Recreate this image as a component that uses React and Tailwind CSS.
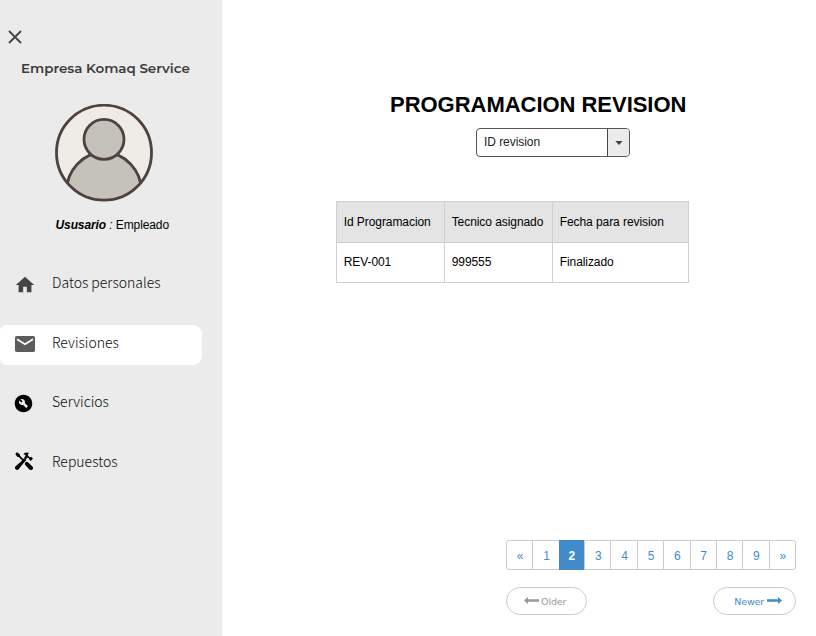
import React from "react";
import { MdHome, MdBuildCircle } from "react-icons/md";

function ToolsIcon({ className }) {
  return (
    <svg viewBox="0 0 18 18" className={className} fill="currentColor">
      <path d="M0.3 1.9L1.9 0.3L4.8 2.2L5 3.8L9.2 8L8 9.2L3.8 5L2.2 4.8z" />
      <path d="M10.4 10.4a2.2 2.2 0 0 1 2.6-.2l4.4 4.2a2.1 2.1 0 0 1-3 3l-4.2-4.4a2.2 2.2 0 0 1 .2-2.6z" />
      <path d="M8.4 2.2C9.8.2 12 0 14.2 1L12.9 2.3V3.4L14.8 5.2L16 4.8L18 6.6L15.8 8.9L13.8 6.9V6.2L12.6 5.6L10.9 7.3L9.1 5.5L10.8 3.8C10.4 2.8 9.6 2.5 8.4 2.2z" />
      <path d="M9.2 5.9L11.4 8.1L8 11.8L3.6 17.2A2.1 2.1 0 0 1 .6 14.2L5.8 9.8z" />
    </svg>
  );
}

function MailIcon({ className }) {
  return (
    <svg viewBox="0 0 20 16" className={className}>
      <rect width="20" height="16" rx="1.8" fill="currentColor" />
      <path d="M2 3.2L10 8.2L18 3.2" fill="none" stroke="#fff" strokeWidth="1.8" />
    </svg>
  );
}

const items = [
  { label: "Datos personales", Icon: MdHome, cls: "size-[22px] ml-[14px] mr-[16px] text-[#444]" },
  { label: "Revisiones", Icon: MailIcon, cls: "h-4 w-5 ml-[15px] mr-[17px] -mt-px text-[#5c5c5c]", active: true },
  { label: "Servicios", Icon: MdBuildCircle, cls: "size-[21px] ml-[13px] mr-[18px] -mt-px text-black" },
  { label: "Repuestos", Icon: ToolsIcon, cls: "size-[18px] ml-[15px] mr-[19px] -mt-[5px] text-black" },
];

const pages = ["«", "1", "2", "3", "4", "5", "6", "7", "8", "9", "»"];

function Avatar() {
  return (
    <svg viewBox="0 0 98 98" className="mt-[26px] ml-[55px] size-[98px]">
      <defs>
        <clipPath id="disc">
          <circle cx="49" cy="49" r="47.5" />
        </clipPath>
      </defs>
      <circle cx="49" cy="48.7" r="47.5" fill="#efebe6" />
      <g clipPath="url(#disc)" fill="#c5c2bb" stroke="#4d423d" strokeWidth="2.8">
        <ellipse cx="49" cy="87.5" rx="37.5" ry="39" />
        <circle cx="49" cy="35.3" r="20" />
      </g>
      <circle cx="49" cy="48.7" r="47.5" fill="none" stroke="#4d423d" strokeWidth="2.8" />
    </svg>
  );
}

function Sidebar() {
  return (
    <aside className="flex h-full w-[222px] shrink-0 flex-col bg-[#ebebeb]">
      <svg viewBox="0 0 14 14" className="mt-[29.5px] ml-2 size-[14px]" fill="none" stroke="#444" strokeWidth="1.8">
        <path d="M1 1l12 12M13 1L1 13" />
      </svg>
      <h2 className="mt-[14.5px] ml-[21px] h-[20px] whitespace-nowrap font-['Montserrat','Inter',sans-serif] text-[13.5px] font-semibold leading-[20px] tracking-[-0.04px] text-[#3c3c3c]">
        Empresa Komaq Service
      </h2>
      <Avatar />
      <p className="mt-[15px] ml-[55.5px] h-4 whitespace-nowrap text-xs leading-4 tracking-[-0.1px] text-black">
        <em>
          <b>Ususario</b> :
        </em>{" "}
        Empleado
      </p>
      <nav className="mt-[32px] flex flex-col gap-[19px]">
        {items.map(({ label, Icon, cls, active }) => (
          <a
            key={label}
            className={
              "flex h-[40.5px] w-[201.5px] items-center rounded-r-[9px] rounded-l-md " + (active ? "bg-white" : "")
            }
          >
            <Icon className={cls} />
            <span className="-mt-[6px] whitespace-nowrap font-['Noto_Sans_CJK_SC',sans-serif] text-[14px] font-light leading-5 text-[#0a0a0a]">
              {label}
            </span>
          </a>
        ))}
      </nav>
    </aside>
  );
}

export default function App() {
  return (
    <div className="flex h-[636px] w-[816px] overflow-hidden bg-white font-['Liberation_Sans',Arial,sans-serif]">
      <Sidebar />
      <main className="flex flex-1 flex-col">
        <h1 className="mt-[91px] ml-[168px] h-7 whitespace-nowrap text-[22px] font-bold leading-7 tracking-[-0.03px] text-black">
          PROGRAMACION REVISION
        </h1>
        <div className="mt-[9px] ml-[254px] flex h-[29px] w-[154px] overflow-hidden rounded-[4px] border border-[#555] text-xs">
          <span className="flex flex-1 items-center pl-[7px] pb-px tracking-[-0.06px] text-[#222]">ID revision</span>
          <span className="flex w-[22px] items-center justify-center border-l border-[#444] bg-[#ebebeb]">
            <svg viewBox="0 0 8 4" className="h-1 w-2">
              <path d="M0.3 0h7.4L4 4z" fill="#444" />
            </svg>
          </span>
        </div>
        <table className="mt-[44px] ml-[114px] w-[353px] table-fixed border-collapse text-xs tracking-[-0.07px] text-black">
          <colgroup>
            <col className="w-[108px]" />
            <col className="w-[108px]" />
            <col />
          </colgroup>
          <tbody>
            <tr className="h-[41px] bg-[#e4e4e4]">
              {["Id Programacion", "Tecnico asignado", "Fecha para revision"].map((t) => (
                <td key={t} className="whitespace-nowrap border border-[#d0d0d0] pl-[6.7px]">{t}</td>
              ))}
            </tr>
            <tr className="h-[40px]">
              {["REV-001", "999555", "Finalizado"].map((t) => (
                <td key={t} className="whitespace-nowrap border border-[#d0d0d0] pl-[6.7px] pb-[2px]">{t}</td>
              ))}
            </tr>
          </tbody>
        </table>
        <div className="mt-auto ml-[284px] flex h-[30px] w-[290px] rounded-[3px] border border-[#ccc] text-xs text-[#428bca]">
          {pages.map((p) => (
            <span
              key={p}
              className={
                "flex flex-1 items-center justify-center border-r border-[#ccc] pt-px pl-px last:border-r-0 " +
                (p === "2" ? "-my-px -ml-px border-[#428bca] bg-[#428bca] font-bold text-white" : "")
              }
            >
              {p}
            </span>
          ))}
        </div>
        <div className="mt-[16.5px] mb-[21px] ml-[284px] flex w-[290px] justify-between font-['DejaVu_Sans',Verdana,sans-serif] text-[9.5px]">
          <span className="flex h-[28.5px] w-[80.5px] items-center gap-[2px] rounded-full border border-[#ccc] pl-[17px] text-[#999]">
            <svg viewBox="0 0 15 7" className="h-[7px] w-[15px]" fill="currentColor">
              <path d="M0 3.5L4 0v2.3h11v2.4H4V7z" />
            </svg>
            <span className="pt-[2px] tracking-[-0.1px]">Older</span>
          </span>
          <span className="flex h-[28.5px] w-[83px] items-center justify-end gap-[3px] rounded-full border border-[#ccc] pr-[13px] text-[#428bca]">
            <span className="pt-[2px] tracking-[-0.15px]">Newer</span>
            <svg viewBox="0 0 15 7" className="h-[7px] w-[15px]" fill="currentColor">
              <path d="M15 3.5L11 0v2.3H0v2.4h11V7z" />
            </svg>
          </span>
        </div>
      </main>
    </div>
  );
}
